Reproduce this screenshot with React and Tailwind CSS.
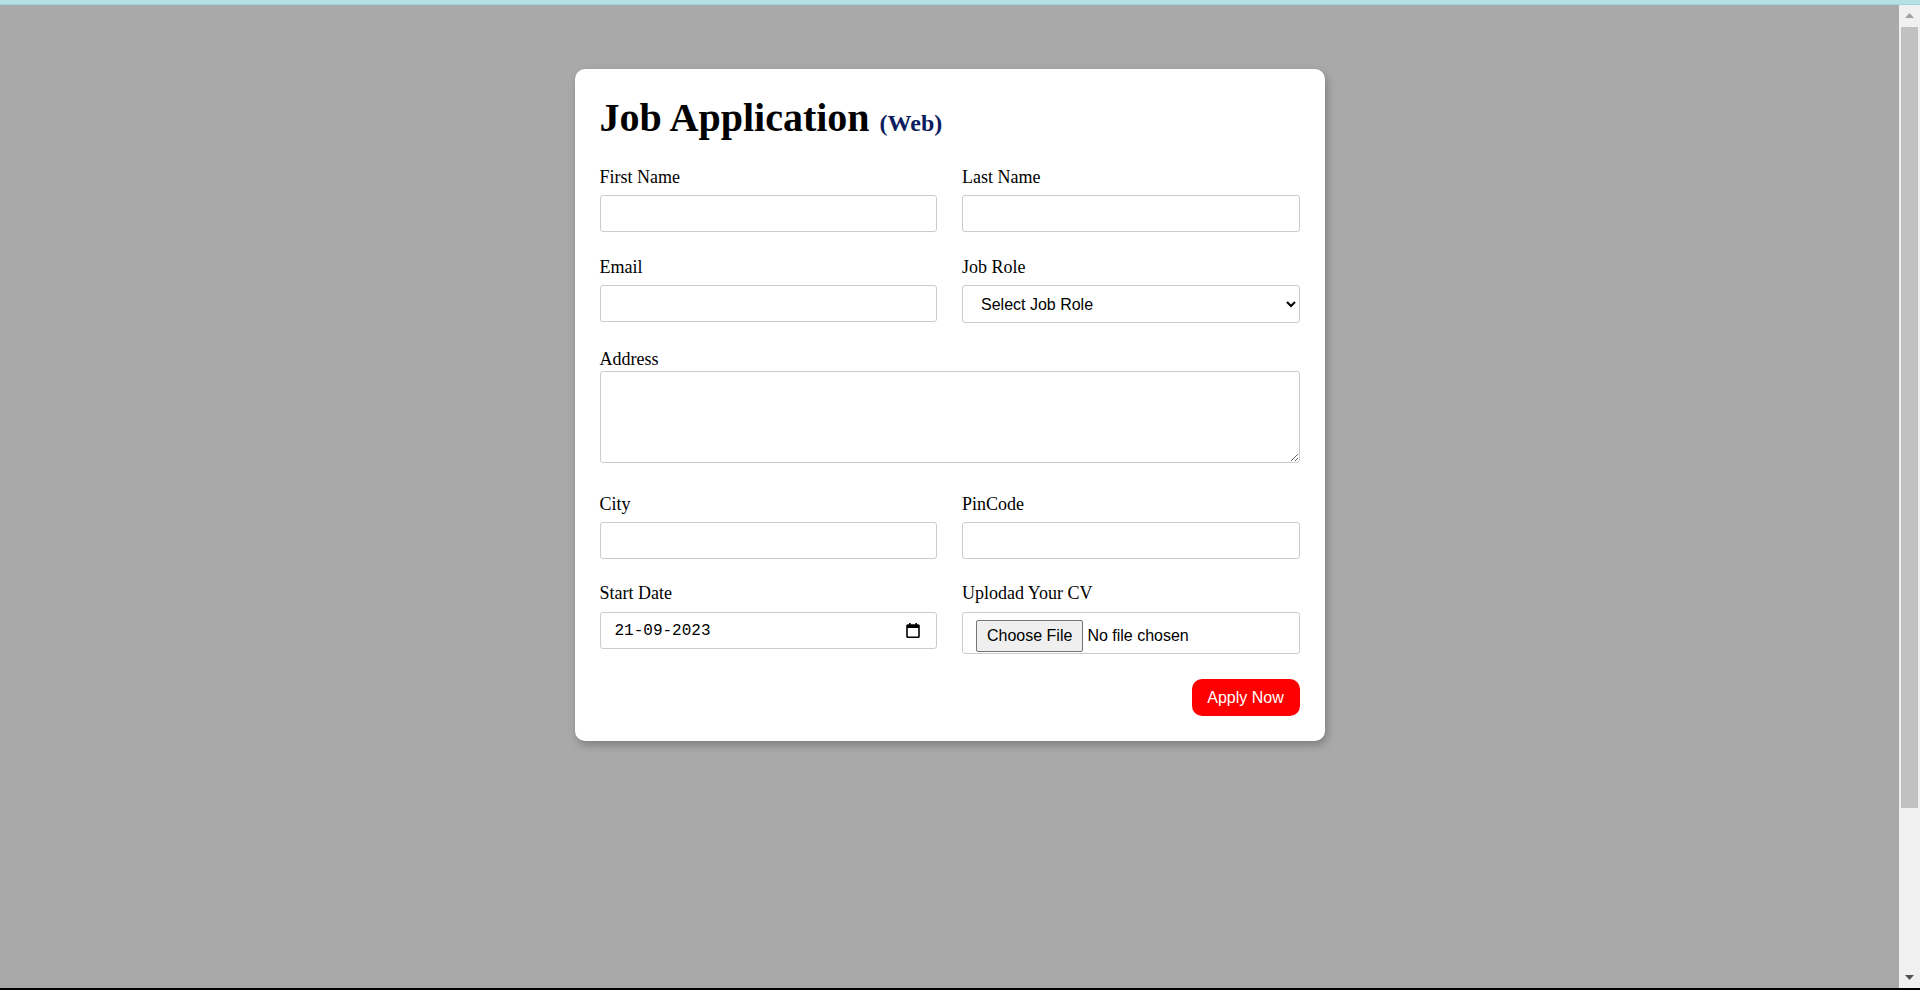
const Field = ({ label, children, labelGap = "mb-[7px]" }) => (
  <div className="flex flex-col">
    <label className={`block text-[18px] leading-[21px] text-black ${labelGap}`}>{label}</label>
    {children}
  </div>
);

const inputCls =
  "h-[37px] w-full border border-[#cccccc] rounded-[3px] bg-white px-[10px] text-[16px] font-['Liberation_Sans',Arial,sans-serif] outline-none";

const CalendarIcon = () => (
  <svg width="14" height="15" viewBox="0 0 14 15" fill="none">
    <rect x="3" y="0" width="1.6" height="3" fill="#000" />
    <rect x="9.4" y="0" width="1.6" height="3" fill="#000" />
    <rect x="1" y="2" width="12" height="12.2" rx="0.8" stroke="#000" strokeWidth="1.6" />
    <rect x="1" y="2" width="12" height="3" fill="#000" />
  </svg>
);

// drawn copy of the browser's scrollbar from the screenshot
const Scrollbar = () => (
  <div className="w-[21px] shrink-0 bg-[#f0f0f0] flex flex-col items-center">
    <div className="h-[21px] flex items-center justify-center">
      <svg width="9" height="5" viewBox="0 0 9 5">
        <polygon points="4.5,0 9,5 0,5" fill="#a3a3a3" />
      </svg>
    </div>
    <div className="mt-[1px] h-[781px] w-[17px] bg-[#c1c1c1]" />
    <div className="flex-1" />
    <div className="h-[21px] flex items-center justify-center">
      <svg width="9" height="5" viewBox="0 0 9 5">
        <polygon points="0,0 9,0 4.5,5" fill="#505050" />
      </svg>
    </div>
  </div>
);

export default function App() {
  return (
    <div className="h-screen flex flex-col font-['Liberation_Serif','Times_New_Roman',serif]">
      <div className="h-[5px] shrink-0 bg-[#b4e1e5] border-b border-[#a3d2d6]" />
      <div className="flex-1 min-h-0 flex">
        <div className="flex-1 min-w-0 overflow-hidden bg-[#a9a9a9] pt-[64px]">
          <div className="mx-auto w-[750px] bg-white rounded-[10px] shadow-[2px_4px_8px_rgba(0,0,0,0.25)] px-[25px] pt-[26px] pb-[25px] flex flex-col">
            <h1 className="text-[40px] leading-[46px] font-bold text-black">
              Job Application <span className="text-[24px] text-[#0b1d5e]">(Web)</span>
            </h1>

            <div className="mt-[21px] grid grid-cols-2 gap-x-[25px] items-start">
              <Field label="First Name">
                <input type="text" className={inputCls} />
              </Field>
              <Field label="Last Name">
                <input type="text" className={inputCls} />
              </Field>
            </div>

            <div className="mt-[25px] grid grid-cols-2 gap-x-[25px] items-start">
              <Field label="Email">
                <input type="email" className={inputCls} />
              </Field>
              <Field label="Job Role">
                <select className="h-[38px] w-full border border-[#cccccc] rounded-[3px] bg-white pl-[14px] pr-[8px] text-[16px] text-black font-['Liberation_Sans',Arial,sans-serif] outline-none">
                  <option>Select Job Role</option>
                  <option>Frontend Developer</option>
                  <option>Backend Developer</option>
                  <option>Full Stack Developer</option>
                </select>
              </Field>
            </div>

            <div className="mt-[26px]">
              <Field label="Address" labelGap="mb-[1px]">
                <textarea className="h-[92px] w-full border border-[#cccccc] rounded-[3px] bg-white p-[10px] text-[16px] font-['Liberation_Sans',Arial,sans-serif] outline-none" />
              </Field>
            </div>

            <div className="mt-[31px] grid grid-cols-2 gap-x-[25px] items-start">
              <Field label="City">
                <input type="text" className={inputCls} />
              </Field>
              <Field label="PinCode">
                <input type="text" className={inputCls} />
              </Field>
            </div>

            <div className="mt-[24px] grid grid-cols-2 gap-x-[25px] items-start">
              <Field label="Start Date" labelGap="mb-[8px]">
                <div className="h-[37px] w-full border border-[#cccccc] rounded-[3px] bg-white pl-[14px] pr-[16px] flex items-center justify-between">
                  <input
                    type="text"
                    defaultValue="21-09-2023"
                    className="w-[120px] text-[16px] text-black font-['Liberation_Mono','Courier_New',monospace] outline-none"
                  />
                  <CalendarIcon />
                </div>
              </Field>
              <Field label="Uplodad Your CV" labelGap="mb-[8px]">
                <input
                  type="file"
                  className="h-[42px] w-full border border-[#cccccc] rounded-[3px] bg-white px-[13px] py-[7px] text-[16px] text-black font-['Liberation_Sans',Arial,sans-serif] file:mr-[4px] file:px-[10px] file:py-[3px] file:border file:border-[#767676] file:rounded-[2px] file:bg-[#efefef] file:text-black"
                />
              </Field>
            </div>

            <button className="mt-[25px] self-end h-[37px] w-[108px] rounded-[10px] bg-[#ff0000] text-white text-[16px] font-['Liberation_Sans',Arial,sans-serif]">
              Apply Now
            </button>
          </div>
        </div>
        <Scrollbar />
      </div>
      <div className="h-[2px] shrink-0 bg-black" />
    </div>
  );
}
